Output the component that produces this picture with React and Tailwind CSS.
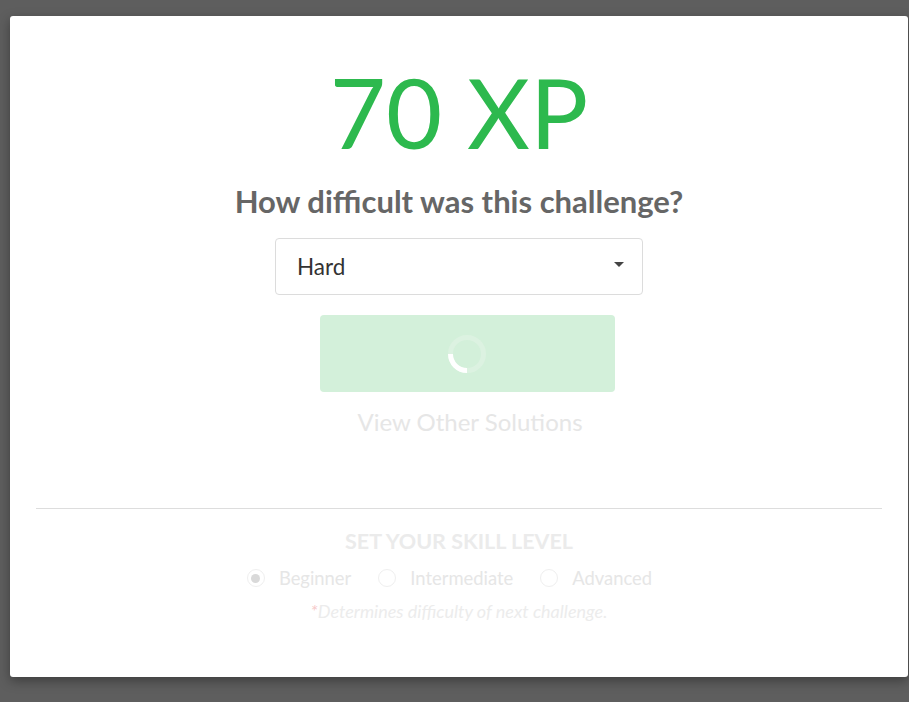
import React, { useState } from "react";

const levels = ["Beginner", "Intermediate", "Advanced"];

const Spinner = () => (
  <svg width="40" height="40" viewBox="0 0 40 40">
    <circle cx="20" cy="20" r="16.5" fill="none" stroke="#dcf2e1" strokeWidth="5" />
    <path d="M3.5 20 A16.5 16.5 0 0 0 20 36.5" fill="none" stroke="#ffffff" strokeWidth="5" />
  </svg>
);

const SkillLevel = () => {
  const [level, setLevel] = useState("Beginner");

  return (
    <div className="flex flex-col items-center">
      <p className="text-[21.5px] leading-[26px] font-bold uppercase text-[#ebebeb]">
        Set your skill level
      </p>
      <div className="flex items-center mt-[13px] ml-[8px]">
        {levels.map((l) => (
          <label key={l} className="flex items-center gap-[14px] mr-[27px] cursor-pointer">
            <span
              onClick={() => setLevel(l)}
              className="w-[18px] h-[18px] rounded-full border border-[#efefef] flex items-center justify-center"
            >
              {level === l && <span className="w-[9px] h-[9px] rounded-full bg-[#d9d9d9]"></span>}
            </span>
            <span className="text-[18.4px] leading-[22px] text-[#e6e6e6]">{l}</span>
          </label>
        ))}
      </div>
      <p className="mt-[11px] text-[18px] leading-[22px] italic text-[#ececec]">
        <span className="text-[#f6caca]">*</span>Determines difficulty of next challenge.
      </p>
    </div>
  );
};

export default function App() {
  const [difficulty, setDifficulty] = useState("Hard");

  return (
    <div className="min-h-[702px] bg-[#5e5e5e] pt-[16px] font-['Lato',sans-serif]">
      <div className="ml-[10px] w-[898px] h-[661px] bg-white rounded-[3px] shadow-[0_4px_12px_rgba(0,0,0,0.35)] px-[26px] pt-[47px] flex flex-col items-center">
        <h1 className="text-[97px] leading-[97px] text-[#2db94e]">70 XP</h1>
        <h2 className="mt-[23px] text-[31px] leading-[37px] font-bold text-[#666666]">
          How difficult was this challenge?
        </h2>

        <div className="relative mt-[18px] w-[368px] h-[57px] border border-[#dcdcdc] rounded-[4px] flex items-center px-[21px]">
          <select
            value={difficulty}
            onChange={(e) => setDifficulty(e.target.value)}
            className="appearance-none bg-transparent w-full h-full outline-none text-[22.5px] text-[#333333]"
          >
            <option>Easy</option>
            <option>Medium</option>
            <option>Hard</option>
          </select>
          <span className="absolute right-[18px] top-[23px] w-0 h-0 border-l-[5px] border-r-[5px] border-t-[5px] border-l-transparent border-r-transparent border-t-[#444444] pointer-events-none"></span>
        </div>

        <button className="mt-[20px] ml-[16px] w-[295px] h-[77px] rounded-[4px] bg-[#d3f0da] flex items-center justify-center">
          <Spinner />
        </button>

        <p className="mt-[15px] ml-[22px] text-[24px] leading-[29px] text-[#e6e6e6]">View Other Solutions</p>

        <div className="w-full mt-[72px] border-t border-[#dddddd]"></div>

        <div className="mt-[19px]">
          <SkillLevel />
        </div>
      </div>
    </div>
  );
}
